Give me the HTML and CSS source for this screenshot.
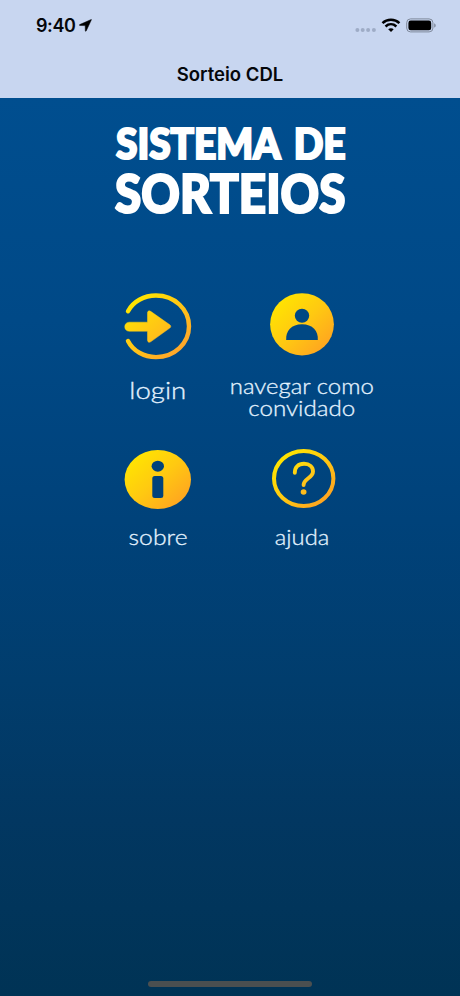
FILE: index.html
```html
<!DOCTYPE html>
<html lang="pt-BR">
<head>
<meta charset="utf-8">
<meta name="viewport" content="width=device-width, initial-scale=1">
<title>Sorteio CDL</title>
<link rel="stylesheet" href="styles.css">
</head>
<body>
<header class="topbar">
  <div class="status">
    <span class="time">9:40</span>
    <svg class="location" width="13" height="13" viewBox="0 0 13 13"><path d="M12.200.500.700 5.600c-.5.3-.4.9.2.9l5.300.1.1 5.100c0 .6.7.7.9.2L12.400.8c.1-.2 0-.4-.2-.3Z" stroke="#05070b" stroke-width=".5"/></svg>
    <svg class="indicators" width="82" height="16" viewBox="0 0 82 16">
      <g fill="#9eacc6"><circle cx="3.400" cy="12" r="2"/><circle cx="8.700" cy="12" r="2"/><circle cx="14.100" cy="12" r="2"/><circle cx="19.900" cy="12" r="2"/></g>
      <g fill="none" stroke="#000" stroke-width="2.500"><path d="M28.500 5.200c4.600-4.500 12.300-4.500 16.900 0"/><path d="M31.500 8.500c3.200-2.900 7.700-2.900 10.900 0"/></g>
      <path d="M34.200 11.200c1.500-1.400 4-1.400 5.500 0l-2.700 2.700Z"/>
      <rect x="52.700" y=".9" width="26.200" height="13" rx="3.800" fill="none" stroke="#7f899b"/>
      <rect x="54.400" y="2.600" width="22.800" height="9.600" rx="2.300"/>
      <path d="M80.200 5.200c2 .8 2 3.600 0 4.400Z" fill="#7f899b"/>
    </svg>
  </div>
  <div class="navtitle">Sorteio CDL</div>
</header>
<main>
  <svg class="headline" width="240" height="96" viewBox="110 124 240 96">
    <text x="116" y="159.200" font-size="41.500" textLength="164.500" lengthAdjust="spacingAndGlyphs">SISTEMA</text>
    <text x="293.700" y="159.200" font-size="41.500" textLength="52" lengthAdjust="spacingAndGlyphs">DE</text>
    <text x="115" y="213" font-size="52.500" textLength="230.500" lengthAdjust="spacingAndGlyphs">SORTEIOS</text>
  </svg>
  <nav class="menu">
    <a class="item">
      <svg width="146" height="146" viewBox="84 280 146 146">
        <defs><linearGradient id="gold" x1="0" y1="0" x2="1" y2="1"><stop offset=".1" stop-color="#ffe600"/><stop offset=".5" stop-color="#ffc911"/><stop offset=".9" stop-color="#ffa321"/></linearGradient>
        <linearGradient id="goldLine" gradientUnits="userSpaceOnUse" x1="134" y1="300" x2="181" y2="352"><stop stop-color="#ffe600"/><stop offset="1" stop-color="#ffa52b"/></linearGradient></defs>
        <path d="M128 311.200C133 301.500 144 295.500 156 295.500c18.500 0 33 13.700 33 30.800s-14.500 30.800-33 30.800c-12 0-23-6.200-28-16.100" fill="none" stroke="url(#goldLine)" stroke-width="4.400" stroke-linecap="round"/>
        <path d="M129.200 322.200H147.500V313.200C147.500 310.800 149.300 310.200 151 311.600L169.800 324.800C171.100 325.800 171.100 327.100 169.800 328L151 341.600C149.300 343 147.500 342.200 147.500 340V331.200H129.200C123.300 331.200 123.300 322.200 129.200 322.200Z" fill="url(#goldLine)" stroke="url(#goldLine)" stroke-width=".5"/>
        <text x="129.300" y="399.300" font-size="23" textLength="57" lengthAdjust="spacingAndGlyphs">login</text>
      </svg>
    </a>
    <a class="item">
      <svg width="146" height="146" viewBox="230 280 146 146">
        <ellipse cx="302" cy="324.300" rx="31.900" ry="31.100" fill="url(#gold)"/>
        <g fill="#004884"><ellipse cx="302" cy="315.700" rx="7.200" ry="7"/><path d="M286.200 340C285.500 331 291.500 324.300 302 324.300S318.500 331 317.800 340Z"/></g>
        <text x="229.800" y="393.700" font-size="21.500" textLength="144" lengthAdjust="spacingAndGlyphs">navegar como</text>
        <text x="248.300" y="415.700" font-size="21.500" textLength="107" lengthAdjust="spacingAndGlyphs">convidado</text>
      </svg>
    </a>
    <a class="item">
      <svg width="146" height="126" viewBox="84 430 146 126">
        <ellipse cx="157.800" cy="479.600" rx="33.200" ry="29.500" fill="url(#gold)"/>
        <g fill="#00427b"><ellipse cx="157.800" cy="466.200" rx="6.200" ry="5.500"/><rect x="152.300" y="476" width="11" height="22" rx="2.500"/></g>
        <text x="128.600" y="545" font-size="22" textLength="59" lengthAdjust="spacingAndGlyphs">sobre</text>
      </svg>
    </a>
    <a class="item">
      <svg width="146" height="126" viewBox="230 430 146 126">
        <defs><linearGradient id="mark" gradientUnits="userSpaceOnUse" x1="292" y1="462" x2="315" y2="492"><stop stop-color="#ffdf09"/><stop offset="1" stop-color="#ffb524"/></linearGradient></defs>
        <ellipse cx="303.700" cy="478.500" rx="29.700" ry="27.600" fill="none" stroke="url(#gold)" stroke-width="4"/>
        <path d="M294.800 472.800C294.800 467 298.500 463.800 304 463.800S313 467 313 471.500C313 478 303.600 478.500 303.600 485" fill="none" stroke="url(#mark)" stroke-width="3.900" stroke-linecap="round"/>
        <ellipse cx="303.600" cy="492" rx="2.900" ry="2.700" fill="#ffbd1c"/>
        <text x="274.800" y="545" font-size="22" textLength="54.500" lengthAdjust="spacingAndGlyphs">ajuda</text>
      </svg>
    </a>
  </nav>
</main>
<footer class="home"></footer>
</body>
</html>
```
FILE: styles.css
```css
* { box-sizing: border-box; }
body {
  margin: 0;
  height: 996px;
  display: flex;
  flex-direction: column;
  overflow: hidden;
  font-family: Inter, sans-serif;
  background: linear-gradient(#004e8f 98px, #004987 320px, #00427a 520px, #013d6d 680px, #023761 820px, #003355 996px);
}
svg { display: block; }
.topbar { height: 98px; background: #c8d6f0; color: #05070b; }
.status { height: 50px; display: flex; align-items: center; padding: 1px 24px 0 36px; }
.time { font-size: 18px; font-weight: 600; line-height: 22px; width: 39px; letter-spacing: -.4px; white-space: nowrap; }
.location { margin-left: 4px; }
.indicators { margin-left: auto; }
.navtitle { height: 48px; line-height: 48px; text-align: center; font-size: 18.500px; font-weight: 600; }
main { flex: 1; padding-top: 26px; }
.headline { margin: 0 auto; overflow: visible; }
.headline text { font-family: Lato, sans-serif; font-weight: 900; fill: #fff; stroke: #fff; stroke-width: 2.200px; }
.menu { display: grid; grid-template-columns: 146px 146px; row-gap: 4px; padding: 60px 0 0 84px; }
.item { display: block; }
.item text { font-family: Lato, sans-serif; font-weight: 300; fill: #e4f3ff; stroke: #e4f3ff; stroke-width: .3px; }
.home { width: 164px; height: 6px; margin: 0 auto 9px; border-radius: 3px; background: #4b4f50; }
```
